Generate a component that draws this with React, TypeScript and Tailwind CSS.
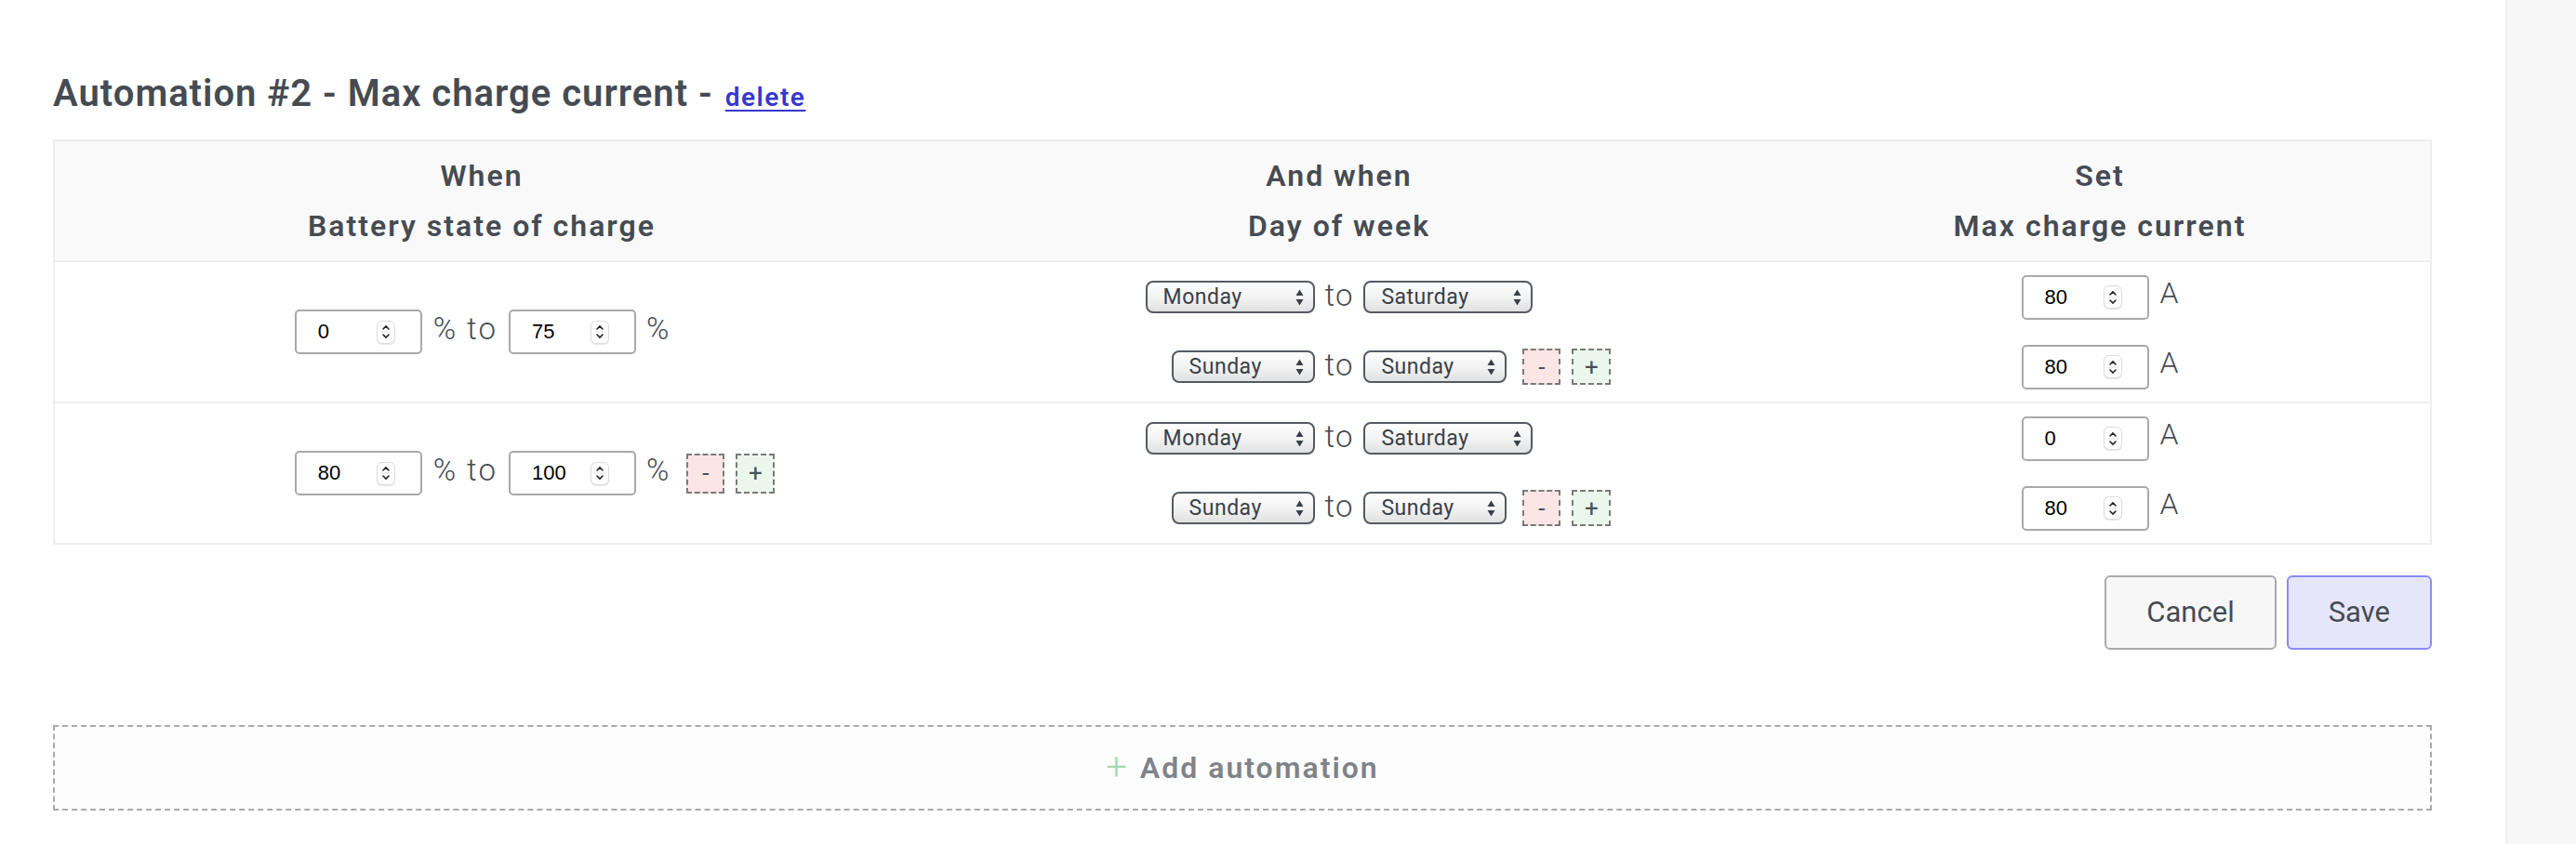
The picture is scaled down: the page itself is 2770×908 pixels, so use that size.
import React from 'react';

const ink = 'text-[#464b52]';

function Spinner() {
    return (
        <div className="flex h-[25px] w-[20px] items-center justify-center rounded-[6px] border border-[#dcdcdc] bg-white shadow-[0_1px_1px_rgba(0,0,0,0.1)]">
            <svg width="12" height="22" viewBox="0 0 12 22">
                <path d="M3 8 L6 5 L9 8" stroke="#222" strokeWidth="1.6" fill="none" strokeLinecap="round" />
                <line x1="0" y1="11" x2="12" y2="11" stroke="#e0e0e0" strokeWidth="1" />
                <path d="M3 14 L6 17 L9 14" stroke="#222" strokeWidth="1.6" fill="none" strokeLinecap="round" />
            </svg>
        </div>
    );
}

function NumInput({ value }: { value: string }) {
    return (
        <div className="flex h-[48px] w-[137px] items-center justify-between rounded-[5px] border-2 border-[#a9a9a9] bg-white pl-[23px] pr-[27px]">
            <span className="font-['Liberation_Sans',Arial,sans-serif] text-[22px] leading-none text-black">{value}</span>
            <Spinner />
        </div>
    );
}

function DaySelect({ label, wide }: { label: string; wide?: boolean }) {
    return (
        <div
            className={`flex h-[35px] items-center justify-between rounded-[8px] border-2 border-[#555a62] bg-linear-to-b from-[#fdfdfd] via-[#f3f3f3] to-[#e1e1e1] pl-[17px] pr-[10px] text-[23px] leading-none tracking-[0.5px] text-[#3a3f46] ${wide ? 'w-[182px]' : 'w-[154px]'}`}
        >
            <span>{label}</span>
            <svg width="9" height="20" viewBox="0 0 9 20">
                <path d="M4.5 1.5 L8.5 8 L0.5 8 Z" fill="#3a3f46" />
                <path d="M0.5 12 L8.5 12 L4.5 18.5 Z" fill="#3a3f46" />
            </svg>
        </div>
    );
}

function PlusMinus({ tall }: { tall?: boolean }) {
    const h = tall ? 'h-[43px]' : 'h-[39px]';
    return (
        <div className="flex gap-[12px]">
            <div className={`flex w-[41px] ${h} items-center justify-center border-2 border-dashed border-[#7a7a7a] bg-[#fbe5e5] text-[26px] leading-none text-[#4a4f57]`}>
                -
            </div>
            <div className={`flex w-[42px] ${h} items-center justify-center border-2 border-dashed border-[#7a7a7a] bg-[#ebf7ec] text-[26px] leading-none text-[#4a4f57]`}>
                +
            </div>
        </div>
    );
}

function SocRange({ from, to, extra }: { from: string; to: string; extra?: boolean }) {
    return (
        <div className="grid w-full grid-cols-[1fr_auto_1fr] items-center">
            <div />
            <div className={`flex items-center ${ink}`}>
                <NumInput value={from} />
                <span className="mx-[12px] mb-[8px] text-[33px] font-light leading-none tracking-[2px]">% to</span>
                <NumInput value={to} />
                <span className="ml-[11px] mb-[8px] text-[33px] font-light leading-none">%</span>
            </div>
            <div className="pl-[19px]">{extra && <PlusMinus tall />}</div>
        </div>
    );
}

function DayLine({ from, to, extra }: { from: string; to: string; extra?: boolean }) {
    return (
        <div className="grid h-[75px] grid-cols-[1fr_auto_1fr] items-center">
            <div className="flex justify-end">
                <DaySelect label={from} wide={from !== 'Sunday'} />
            </div>
            <span className={`mx-[11px] mb-[5px] text-[33px] font-light leading-none tracking-[1px] ${ink}`}>to</span>
            <div className="flex items-center">
                <DaySelect label={to} wide={to !== 'Sunday'} />
                {extra && (
                    <div className="ml-[17px]">
                        <PlusMinus />
                    </div>
                )}
            </div>
        </div>
    );
}

function AmpLine({ value }: { value: string }) {
    return (
        <div className="flex h-[75px] items-center justify-center">
            <NumInput value={value} />
            <span className={`ml-[12px] mb-[9px] text-[32px] font-light leading-none ${ink}`}>A</span>
        </div>
    );
}

const rows = [
    { soc: ['0', '75'], days: [['Monday', 'Saturday'], ['Sunday', 'Sunday']], amps: ['80', '80'], extra: false },
    { soc: ['80', '100'], days: [['Monday', 'Saturday'], ['Sunday', 'Sunday']], amps: ['0', '80'], extra: true },
];

export default function App() {
    return (
        <div className="flex min-h-[908px] bg-white font-['Roboto','Liberation_Sans',sans-serif]">
            <div className="flex-1 pl-[57px] pr-[79px] pt-[77px]">
                <h1 className={`flex h-[48px] items-baseline text-[40px] font-semibold leading-[48px] tracking-[1px] ${ink}`}>
                    Automation #2 - Max charge current -
                    <a href="#" className="ml-[13px] text-[28px] font-semibold tracking-[1.5px] text-[#3838cc] underline decoration-2 underline-offset-[4px]">
                        delete
                    </a>
                </h1>

                <div className="mt-[25px] border-2 border-[#eeeeee]">
                    <div className={`grid grid-cols-[918px_926px_1fr] bg-[#f9f9f9] py-[10px] text-center text-[32px] font-semibold leading-[54px] tracking-[2px] ${ink}`}>
                        <div>
                            <div>When</div>
                            <div>Battery state of charge</div>
                        </div>
                        <div>
                            <div>And when</div>
                            <div>Day of week</div>
                        </div>
                        <div>
                            <div>Set</div>
                            <div>Max charge current</div>
                        </div>
                    </div>

                    {rows.map((r, i) => (
                        <div key={i} className="grid grid-cols-[918px_926px_1fr] border-t-2 border-[#eeeeee]">
                            <div className="flex items-center justify-center">
                                <SocRange from={r.soc[0]} to={r.soc[1]} extra={r.extra} />
                            </div>
                            <div className="flex flex-col">
                                <DayLine from={r.days[0][0]} to={r.days[0][1]} />
                                <DayLine from={r.days[1][0]} to={r.days[1][1]} extra />
                            </div>
                            <div className="flex flex-col">
                                <AmpLine value={r.amps[0]} />
                                <AmpLine value={r.amps[1]} />
                            </div>
                        </div>
                    ))}
                </div>

                <div className="mt-[33px] flex justify-end gap-[11px]">
                    <button className={`h-[80px] rounded-[6px] border-2 border-[#aaaaaa] bg-[#f7f7f7] px-[43px] text-[31px] ${ink}`}>
                        Cancel
                    </button>
                    <button className={`h-[80px] rounded-[6px] border-2 border-[#8b8bf5] bg-[#e6e6fb] px-[43px] text-[31px] ${ink}`}>
                        Save
                    </button>
                </div>

                <div className="mt-[81px] flex h-[92px] items-center justify-center gap-[14px] border-2 border-dashed border-[#aaaaaa] bg-[#fdfdfd]">
                    <span className="text-[40px] font-light leading-none text-[#a3d8b0]">+</span>
                    <span className="text-[32px] font-semibold leading-none tracking-[2px] text-[#808389]">Add automation</span>
                </div>
            </div>
            <div className="w-[76px] shrink-0 border-l-2 border-[#efefef] bg-[#f7f7f7]" />
        </div>
    );
}
